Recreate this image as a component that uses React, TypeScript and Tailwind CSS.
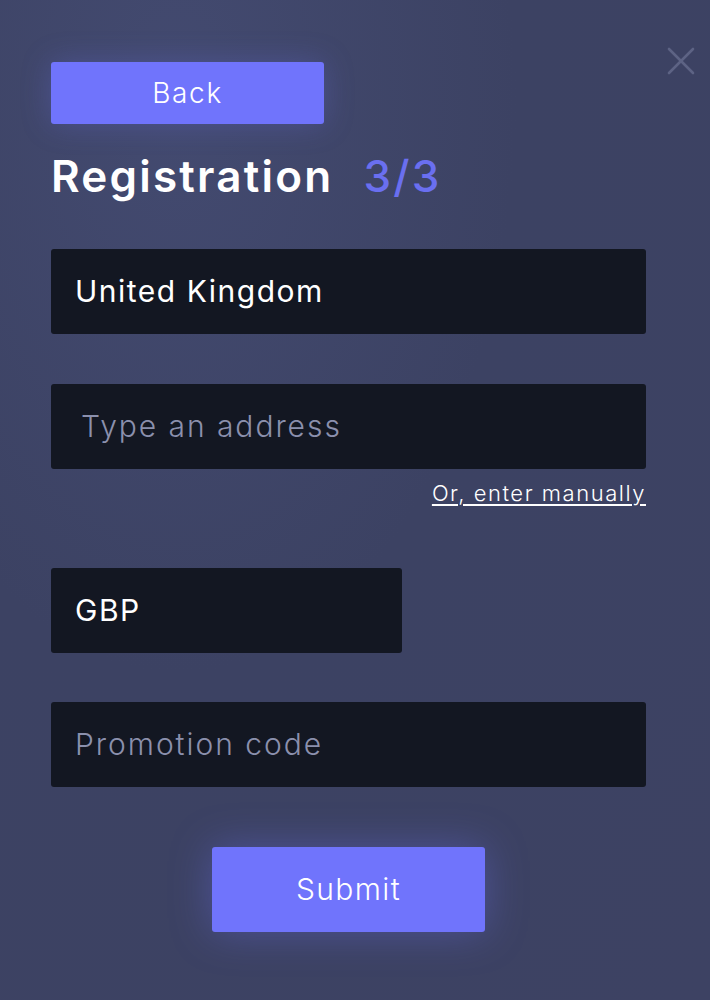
import { X } from "lucide-react";

const font = { fontFamily: "Inter, 'Noto Sans', sans-serif" };

function Field({ value, placeholder, className = "", pad = "px-6" }: { value?: string; placeholder?: string; className?: string; pad?: string }) {
  return (
    <div className={`flex h-[85px] items-center rounded-[3px] bg-[#131722] ${pad} ${className}`}>
      {value ? (
        <span className="text-[30px] font-normal tracking-[0.05em] text-white">{value}</span>
      ) : (
        <span className="text-[30px] font-light tracking-[0.065em] text-[#8b90ad]">{placeholder}</span>
      )}
    </div>
  );
}

export default function App() {
  return (
    <div
      className="relative min-h-[1000px] w-full bg-[radial-gradient(ellipse_at_25%_10%,#434a70_0%,#3c4263_45%,#3d4263_100%)]"
      style={font}
    >
      <button
        type="button"
        aria-label="Close"
        className="absolute right-[5px] top-[37px] text-[#5d6384]"
      >
        <X className="h-[48px] w-[48px]" strokeWidth={1.3} />
      </button>

      <div className="flex flex-col px-[51px] pt-[62px]">
        <button
          type="button"
          className="h-[62px] w-[273px] rounded-[3px] bg-[#7074fc] text-[28px] font-light tracking-[0.06em] text-white shadow-[0_0_30px_rgba(112,116,252,0.25)]"
        >
          Back
        </button>

        <h1 className="mt-[22px] flex items-baseline text-[44px] font-semibold leading-[60px] tracking-[0.05em] text-white">
          Registration
          <span className="ml-[30px] font-medium text-[#6a6ff0]">3/3</span>
        </h1>

        <Field value="United Kingdom" className="mt-[43px] w-[595px]" />
        <Field placeholder="Type an address" className="mt-[50px] w-[595px]" pad="px-[30px]" />
        <div className="mt-[10px] flex w-[595px] justify-end">
          <a href="#" className="text-[22px] font-light leading-[28px] tracking-[0.07em] text-white underline underline-offset-[3px]">
            Or, enter manually
          </a>
        </div>

        <Field value="GBP" className="mt-[61px] w-[351px]" />
        <Field placeholder="Promotion code" className="mt-[49px] w-[595px]" />

        <div className="mt-[60px] flex w-[595px] justify-center">
          <button
            type="button"
            className="h-[85px] w-[273px] rounded-[3px] bg-[#7074fc] text-[30px] font-light tracking-[0.045em] text-white shadow-[0_0_40px_rgba(112,116,252,0.35)]"
          >
            Submit
          </button>
        </div>
      </div>
    </div>
  );
}
